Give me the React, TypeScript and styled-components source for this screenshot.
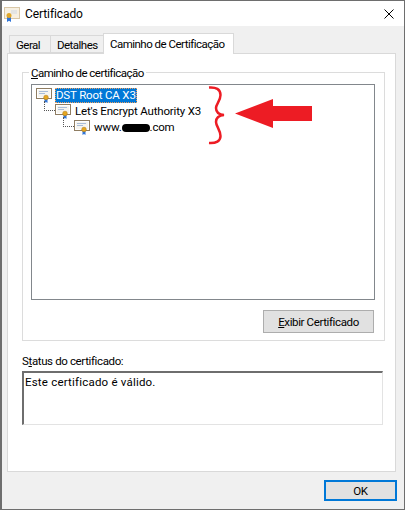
import React from 'react';
import styled, { createGlobalStyle } from 'styled-components';

const Global = createGlobalStyle`
  html, body { margin: 0; padding: 0; background: #f0f0f0; }
  * { box-sizing: border-box; }
`;

const Win = styled.div`
  position: relative;
  width: 405px;
  height: 510px;
  overflow: hidden;
  background: #f0f0f0;
  border: 1px solid #6e6e6e;
  border-width: 1px 1px 1px 2px;
  font-family: "Roboto", "Noto Sans", sans-serif;
  font-size: 11.5px;
  letter-spacing: -0.1px;
  line-height: 16px;
  color: #000;
  display: flex;
  flex-direction: column;
`;

const TitleBar = styled.div`
  height: 25px;
  background: #fff;
  display: flex;
  align-items: center;
  padding: 0 0 0 2px;
  flex: none;
`;

const TitleText = styled.span`
  margin-left: 5px;
  font-size: 12px;
`;

const CloseBtn = styled.div`
  margin-left: auto;
  margin-right: 10px;
  width: 10px;
  height: 10px;
  display: flex;
`;

const Tabs = styled.div`
  margin-top: 7px;
  padding-left: 7px;
  display: flex;
  align-items: flex-end;
  height: 20px;
  flex: none;
  position: relative;
  z-index: 1;
`;

const Tab = styled.div<{ $active?: boolean; $w: number }>`
  width: ${p => p.$w}px;
  height: ${p => (p.$active ? 21 : 18)}px;
  margin-bottom: ${p => (p.$active ? -1 : 0)}px;
  padding-left: 6px;
  background: ${p => (p.$active ? '#fff' : '#f0f0f0')};
  border: 1px solid #d9d9d9;
  border-bottom: ${p => (p.$active ? 'none' : '1px solid #d9d9d9')};
  border-right: ${p => (p.$active ? '1px solid #d9d9d9' : 'none')};
  letter-spacing: -0.52px;
  line-height: ${p => (p.$active ? 20 : 19)}px;
  white-space: nowrap;
`;

const Panel = styled.div`
  margin: 0 8px 0 5px;
  height: 419px;
  flex: none;
  background: #fff;
  border: 1px solid #d9d9d9;
  padding: 11px 10px 0 14px;
`;

const Group = styled.fieldset`
  margin: 0;
  padding: 0 9px 0 8px;
  width: 363px;
  height: 276px;
  border: 1px solid #dcdcdc;
  min-width: 0;
  display: flex;
  flex-direction: column;
`;

const Legend = styled.legend`
  padding: 0 2px;
  margin-left: -2px;
  letter-spacing: -0.53px;
  line-height: 17px;
  height: 15px;
`;

const Under = styled.span`
  text-decoration: underline;
  text-underline-offset: 1px;
`;

const Tree = styled.div`
  height: 216px;
  border: 1px solid #82878c;
  margin-top: 4px;
  padding: 2px 0 0 4px;
  flex: none;
`;

const Node = styled.div<{ $level: number }>`
  position: relative;
  height: 16px;
  display: flex;
  align-items: center;
  margin-left: ${p => p.$level * 19}px;
  white-space: nowrap;
`;

const Connector = styled.span`
  position: absolute;
  left: -11px;
  top: -2px;
  width: 11px;
  height: 10px;
  border-left: 1px dotted #555;
  border-bottom: 1px dotted #555;
`;

const Label = styled.span<{ $selected?: boolean }>`
  margin-left: 3px;
  padding: 0 1px;
  height: 15px;
  line-height: 15px;
  letter-spacing: -0.18px;
  background: ${p => (p.$selected ? '#0078d7' : 'transparent')};
  color: ${p => (p.$selected ? '#fff' : '#000')};
  outline: ${p => (p.$selected ? '1px dotted #f0a060' : 'none')};
  outline-offset: -1px;
`;

const Blot = styled.span`
  display: inline-block;
  width: 28px;
  height: 8px;
  background: #000;
  border-radius: 4px;
  vertical-align: -1px;
`;

const ButtonRow = styled.div`
  display: flex;
  justify-content: flex-end;
  margin-top: 10px;
  padding-right: 1px;
`;

const Button = styled.div<{ $default?: boolean; $w: number; $h: number }>`
  width: ${p => p.$w}px;
  height: ${p => p.$h}px;
  background: #e1e1e1;
  border: ${p => (p.$default ? '2px solid #0078d7' : '1px solid #adadad')};
  letter-spacing: -0.38px;
  display: flex;
  align-items: center;
  justify-content: center;
`;

const StatusLabel = styled.div`
  margin-top: 12px;
  height: 15px;
  line-height: 17px;
  letter-spacing: -0.37px;
`;

const StatusBox = styled.div`
  margin-top: 3px;
  width: 361px;
  height: 54px;
  border-style: solid;
  border-width: 2px 1px 1px 2px;
  border-color: #6e6e6e #e3e3e3 #e3e3e3 #6e6e6e;
  padding: 0 0 0 1px;
  letter-spacing: 0.2px;
  line-height: 18px;
`;

const Footer = styled.div`
  flex: 1;
  display: flex;
  justify-content: flex-end;
  padding: 8px 7px 0 0;
`;

const Annotation = styled.svg`
  position: absolute;
  left: 201px;
  top: 83px;
`;

const CertIcon = () => (
  <svg width="16" height="16" viewBox="0 0 16 16" style={{ flex: 'none' }}>
    <rect x="0.5" y="1.5" width="15" height="10" fill="#f6f4ee" stroke="#8f7d62" />
    <rect x="1.5" y="2.5" width="13" height="8" fill="none" stroke="#fff" />
    <path d="M3 4.500h9M3 6.500h6" stroke="#a9bdd8" strokeWidth="1" />
    <path d="M8.500 12v4l1.500-1 1.500 1v-4z" fill="#2f74d8" />
    <circle cx="10" cy="10.500" r="2.300" fill="#e6a71f" stroke="#b9801a" strokeWidth="0.6" />
  </svg>
);

const TitleIcon = () => (
  <svg width="16" height="16" viewBox="0 0 16 16" style={{ flex: 'none' }}>
    <rect x="0.5" y="1.500" width="15" height="11" fill="#f7f0e2" stroke="#d9c7a6" />
    <path d="M7 5h6M7 7h6" stroke="#cfd8e4" strokeWidth="1" />
    <path d="M3 11v5l2-1.200 2 1.200v-5z" fill="#2f74d8" />
    <circle cx="5" cy="9.500" r="2.500" fill="#e0a72a" />
  </svg>
);

export default function App() {
  return (
    <>
      <Global />
      <Win>
        <TitleBar>
          <TitleIcon />
          <TitleText>Certificado</TitleText>
          <CloseBtn>
            <svg width="10" height="10" viewBox="0 0 10 10">
              <path d="M0.500 0.500l9 9M9.500 0.500l-9 9" stroke="#000" strokeWidth="1" fill="none" />
            </svg>
          </CloseBtn>
        </TitleBar>
        <Tabs>
          <Tab $w={41}>Geral</Tab>
          <Tab $w={53}>Detalhes</Tab>
          <Tab $active $w={131}>Caminho de Certificação</Tab>
        </Tabs>
        <Panel>
          <Group>
            <Legend><Under>C</Under>aminho de certificação</Legend>
            <Tree>
              <Node $level={0}>
                <CertIcon />
                <Label $selected>DST Root CA X3</Label>
              </Node>
              <Node $level={1}>
                <Connector />
                <CertIcon />
                <Label>Let's Encrypt Authority X3</Label>
              </Node>
              <Node $level={2}>
                <Connector />
                <CertIcon />
                <Label>www.<Blot />.com</Label>
              </Node>
            </Tree>
            <ButtonRow>
              <Button $w={111} $h={23}><span><Under>E</Under>xibir Certificado</span></Button>
            </ButtonRow>
          </Group>
          <StatusLabel>S<Under>t</Under>atus do certificado:</StatusLabel>
          <StatusBox>Este certificado é válido.</StatusBox>
        </Panel>
        <Footer>
          <Button $default $w={73} $h={21}>OK</Button>
        </Footer>
        <Annotation width="112" height="62" viewBox="203 84 112 62">
          <path d="M209 87.500C216 87 220.500 89 220.500 95C220.500 101 216 104 216 108C216 112 219 114.500 224 115C219 115.500 216 118 216 122C216 126 220.500 130 220.500 136C220.500 141 216 143.500 209 143" fill="none" stroke="#ed1c24" strokeWidth="2.500" />
          <path d="M235 113.500L273 99V106H312V121H273V128Z" fill="#ed1c24" />
        </Annotation>
      </Win>
    </>
  );
}
